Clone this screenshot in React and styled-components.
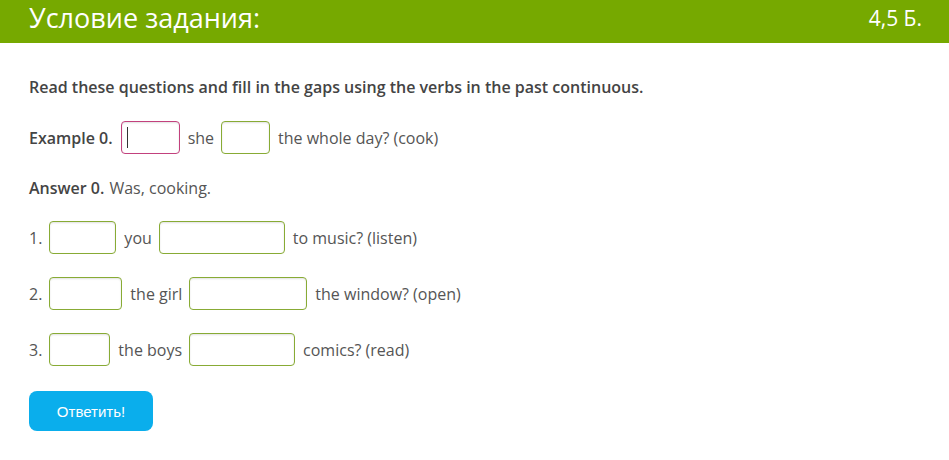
import React from 'react';
import styled, { createGlobalStyle } from 'styled-components';

const GlobalStyle = createGlobalStyle`
  body {
    margin: 0;
    background: #fff;
    font-family: "Open Sans", sans-serif;
    color: #444;
  }
`;

const Header = styled.div`
  height: 43px;
  background-color: #76a900;
  display: flex;
  align-items: center;
  justify-content: space-between;
  padding: 0 27px 0 29px;
  color: #fff;
`;

const Title = styled.h1`
  margin: 0;
  font-size: 27px;
  font-weight: 400;
  line-height: 1;
  margin-top: -8px;
`;

const Score = styled.span`
  font-size: 21px;
  margin-top: -8px;
`;

const Content = styled.div`
  padding: 32px 29px 0;
  display: flex;
  flex-direction: column;
`;

const Instruction = styled.p`
  margin: 0;
  height: 24px;
  line-height: 24px;
  font-size: 16px;
  font-weight: 600;
  color: #444;
`;

const Row = styled.div`
  display: flex;
  align-items: center;
  margin-top: ${p => p.gap || 26}px;
  height: 33px;
  font-size: 16px;
  color: #555;
`;

const Label = styled.span`
  font-weight: 600;
  color: #444;
  margin-right: ${p => p.spacing ?? 8}px;
`;

const Num = styled.span`
  margin-right: 7px;
`;

const Word = styled.span`
  margin: 0 7px 0 8px;
  white-space: nowrap;
`;

const Gap = styled.input`
  box-sizing: border-box;
  width: ${p => p.w}px;
  height: 33px;
  border: 1px solid ${p => (p.focus ? '#c2417d' : '#88ab35')};
  border-radius: 4px;
  box-shadow: inset 0 1px 2px rgba(0, 0, 0, 0.12);
  outline: none;
  padding: 0 5px;
  font-family: "Open Sans", sans-serif;
  font-size: 16px;
  background: #fff;
`;

const Caret = styled.span`
  position: relative;
  display: flex;
`;

const CaretLine = styled.span`
  position: absolute;
  left: 6px;
  top: 6px;
  width: 1px;
  height: 21px;
  background: #333;
`;

const SubmitButton = styled.button`
  margin-top: 25px;
  width: 124px;
  height: 40px;
  border: none;
  border-radius: 8px;
  background-color: #0aaeec;
  color: #fff;
  font-family: "Liberation Sans", Arial, sans-serif;
  font-size: 15px;
  cursor: pointer;
  padding: 0;
`;

const questions = [
  { num: '1.', a: 67, word: 'you', b: 126, rest: 'to music? (listen)', gap: 17 },
  { num: '2.', a: 73, word: 'the girl', b: 118, rest: 'the window? (open)', gap: 23 },
  { num: '3.', a: 61, word: 'the boys', b: 106, rest: 'comics? (read)', gap: 23 },
];

export default function App() {
  return (
    <>
      <GlobalStyle />
      <Header>
        <Title>Условие задания:</Title>
        <Score>4,5 Б.</Score>
      </Header>
      <Content>
        <Instruction>Read these questions and fill in the gaps using the verbs in the past continuous.</Instruction>
        <Row gap={22}>
          <Label spacing={8}>Example 0.</Label>
          <Caret>
            <Gap w={59} focus readOnly />
            <CaretLine />
          </Caret>
          <Word>she</Word>
          <Gap w={49} readOnly />
          <Word>the whole day? (cook)</Word>
        </Row>
        <Row gap={17}>
          <Label spacing={5}>Answer 0.</Label>
          <span>Was, cooking.</span>
        </Row>
        {questions.map(q => (
          <Row key={q.num} gap={q.gap}>
            <Num>{q.num}</Num>
            <Gap w={q.a} readOnly />
            <Word>{q.word}</Word>
            <Gap w={q.b} readOnly />
            <Word>{q.rest}</Word>
          </Row>
        ))}
        <div>
          <SubmitButton>Ответить!</SubmitButton>
        </div>
      </Content>
    </>
  );
}
